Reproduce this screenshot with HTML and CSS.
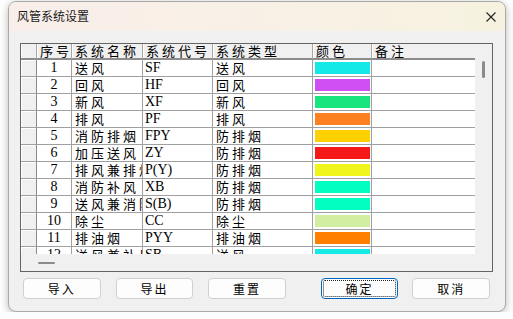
FILE: index.html
```html
<!DOCTYPE html>
<html lang="zh">
<head>
<meta charset="utf-8">
<title>风管系统设置</title>
<link rel="stylesheet" href="styles.css">
</head>
<body>
<div class="window">
  <div class="titlebar">
    <span class="title">风管系统设置</span>
    <svg class="close" width="10" height="10" viewBox="0 0 10 10"><path d="M0.5 0.5 L9.5 9.5 M9.5 0.5 L0.5 9.5" stroke="#222" stroke-width="1.1" fill="none"/></svg>
  </div>
  <div class="content">
    <div class="grid">
      <div class="grid-main">
        <div class="cells">
          <div class="row head">
            <div class="c rh"></div>
            <div class="c h">序号</div>
            <div class="c h">系统名称</div>
            <div class="c h">系统代号</div>
            <div class="c h">系统类型</div>
            <div class="c h">颜色</div>
            <div class="c h">备注</div>
          </div>
          <div class="row"><div class="c rh"></div><div class="c num">1</div><div class="c cjk">送风</div><div class="c code">SF</div><div class="c cjk">送风</div><div class="c sw"><span class="swatch" style="background:#15e9e7"></span></div><div class="c"></div></div>
          <div class="row"><div class="c rh"></div><div class="c num">2</div><div class="c cjk">回风</div><div class="c code">HF</div><div class="c cjk">回风</div><div class="c sw"><span class="swatch" style="background:#d04ff4"></span></div><div class="c"></div></div>
          <div class="row"><div class="c rh"></div><div class="c num">3</div><div class="c cjk">新风</div><div class="c code">XF</div><div class="c cjk">新风</div><div class="c sw"><span class="swatch" style="background:#17e67e"></span></div><div class="c"></div></div>
          <div class="row"><div class="c rh"></div><div class="c num">4</div><div class="c cjk">排风</div><div class="c code">PF</div><div class="c cjk">排风</div><div class="c sw"><span class="swatch" style="background:#ff8020"></span></div><div class="c"></div></div>
          <div class="row"><div class="c rh"></div><div class="c num">5</div><div class="c cjk">消防排烟</div><div class="c code">FPY</div><div class="c cjk">防排烟</div><div class="c sw"><span class="swatch" style="background:#ffd000"></span></div><div class="c"></div></div>
          <div class="row"><div class="c rh"></div><div class="c num">6</div><div class="c cjk">加压送风</div><div class="c code">ZY</div><div class="c cjk">防排烟</div><div class="c sw"><span class="swatch" style="background:#f41818"></span></div><div class="c"></div></div>
          <div class="row"><div class="c rh"></div><div class="c num">7</div><div class="c cjk">排风兼排烟</div><div class="c code">P(Y)</div><div class="c cjk">防排烟</div><div class="c sw"><span class="swatch" style="background:#f0f51c"></span></div><div class="c"></div></div>
          <div class="row"><div class="c rh"></div><div class="c num">8</div><div class="c cjk">消防补风</div><div class="c code">XB</div><div class="c cjk">防排烟</div><div class="c sw"><span class="swatch" style="background:#00ffc0"></span></div><div class="c"></div></div>
          <div class="row"><div class="c rh"></div><div class="c num">9</div><div class="c cjk">送风兼消防补风</div><div class="c code">S(B)</div><div class="c cjk">防排烟</div><div class="c sw"><span class="swatch" style="background:#00ffc0"></span></div><div class="c"></div></div>
          <div class="row"><div class="c rh"></div><div class="c num">10</div><div class="c cjk">除尘</div><div class="c code">CC</div><div class="c cjk">除尘</div><div class="c sw"><span class="swatch" style="background:#d2eea0"></span></div><div class="c"></div></div>
          <div class="row"><div class="c rh"></div><div class="c num">11</div><div class="c cjk">排油烟</div><div class="c code">PYY</div><div class="c cjk">排油烟</div><div class="c sw"><span class="swatch" style="background:#ff8000"></span></div><div class="c"></div></div>
          <div class="row"><div class="c rh"></div><div class="c num">12</div><div class="c cjk">送风兼补风</div><div class="c code">SB</div><div class="c cjk">送风</div><div class="c sw"><span class="swatch" style="background:#15e9e7"></span></div><div class="c"></div></div>
        </div>
        <div class="vscroll"><div class="vthumb"></div></div>
      </div>
      <div class="hscroll"><div class="hthumb"></div></div>
    </div>
    <div class="buttons">
      <button class="btn">导入</button>
      <button class="btn">导出</button>
      <button class="btn">重置</button>
      <button class="btn primary"><span class="focus">确定</span></button>
      <button class="btn">取消</button>
    </div>
  </div>
</div>
</body>
</html>
```
FILE: styles.css
```css
html, body {
  margin: 0;
  padding: 0;
  background: #ffffff;
}
body {
  font-family: "Noto Sans CJK SC", "Liberation Sans", sans-serif;
  color: #000;
}
.window {
  box-sizing: border-box;
  margin: 1px 0 0 8px;
  width: 498px;
  height: 311px;
  border: 1px solid #a9a9a9;
  border-radius: 8px;
  background: #f0f0f0;
  box-shadow: 0 2px 9px rgba(0, 0, 0, 0.28);
  overflow: hidden;
}
.titlebar {
  height: 29px;
  display: flex;
  align-items: center;
  justify-content: space-between;
  padding: 0 9px 0 8px;
  background: linear-gradient(90deg, #f9eeea 0%, #f8f0e6 50%, #f6f2df 100%);
}
.title {
  font-size: 12px;
  line-height: 16px;
  color: #1a1a1a;
  margin-top: -1px;
}
.close {
  display: block;
  margin-top: 1px;
}
.content {
  padding: 12px 0 0 11px;
}
.grid {
  box-sizing: border-box;
  width: 473px;
  height: 229px;
  border: 1px solid #646464;
  background: #f0f0f0;
  display: flex;
  flex-direction: column;
}
.grid-main {
  display: flex;
  height: 210px;
}
.cells {
  width: 454px;
  height: 210px;
  overflow: hidden;
  background: #fff;
}
.row {
  display: grid;
  grid-template-columns: 16px 35px 71px 70px 100px 59px 103px;
  height: 17px;
}
.c {
  box-sizing: border-box;
  border-right: 1px solid #a0a0a0;
  border-bottom: 1px solid #a0a0a0;
  height: 17px;
  overflow: hidden;
  white-space: nowrap;
  font-size: 13px;
  line-height: 16px;
  padding-left: 3px;
}
.c:last-child {
  border-right: none;
}
.rh {
  background: #f0f0f0;
  box-shadow: inset 1px 1px 0 #ffffff;
  border-right-color: #8a8a8a;
  border-bottom-color: #a0a0a0;
  padding: 0;
}
.head {
  height: 16px;
}
.head .c {
  height: 16px;
  line-height: 14px;
  overflow: visible;
  background: #f0f0f0;
  border-bottom: 2px solid #8c8c8c;
  border-right-color: #a8a8a8;
  box-shadow: inset 1px 0 0 #ffffff;
}
.head .rh {
  border-bottom: 2px solid #8c8c8c;
}
.h {
  letter-spacing: 3px;
}
.cjk {
  letter-spacing: 3px;
}
.num {
  font-family: "Liberation Serif", serif;
  text-align: center;
  padding-left: 0;
  font-size: 14px;
}
.code {
  font-family: "Liberation Serif", serif;
  font-size: 14px;
  padding-left: 2px;
}
.sw {
  display: flex;
  align-items: center;
  padding-left: 2px;
}
.swatch {
  display: block;
  width: 55px;
  height: 12px;
}
.vscroll {
  width: 17px;
  height: 210px;
  background: #f0f0f0;
  position: relative;
}
.vthumb {
  position: absolute;
  left: 7px;
  top: 17px;
  width: 3px;
  height: 17px;
  border-radius: 2px;
  background: #8b8b8b;
}
.hscroll {
  height: 17px;
  position: relative;
  background: #f0f0f0;
}
.hthumb {
  position: absolute;
  left: 17px;
  top: 8px;
  width: 17px;
  height: 2px;
  border-radius: 1px;
  background: #8b8b8b;
}
.buttons {
  display: flex;
  margin: 6px 0 0 3px;
}
.btn {
  box-sizing: border-box;
  width: 78px;
  height: 21px;
  padding: 0;
  margin-right: 15px;
  border: 1px solid #d0d0d0;
  border-radius: 4px;
  background: #fdfdfd;
  font-family: "Noto Sans CJK SC", sans-serif;
  font-size: 12px;
  letter-spacing: 2px;
  color: #000;
  display: flex;
  align-items: center;
  justify-content: center;
}
.btn:nth-child(3) {
  margin-right: 35px;
}
.btn:nth-child(4) {
  margin-right: 14px;
}
.primary {
  border: 1px solid #0067c0;
  padding: 1px;
}
.focus {
  display: flex;
  align-items: center;
  justify-content: center;
  width: 100%;
  height: 100%;
  box-sizing: border-box;
  border: 1px dotted #222;
  border-radius: 2px;
}
```
